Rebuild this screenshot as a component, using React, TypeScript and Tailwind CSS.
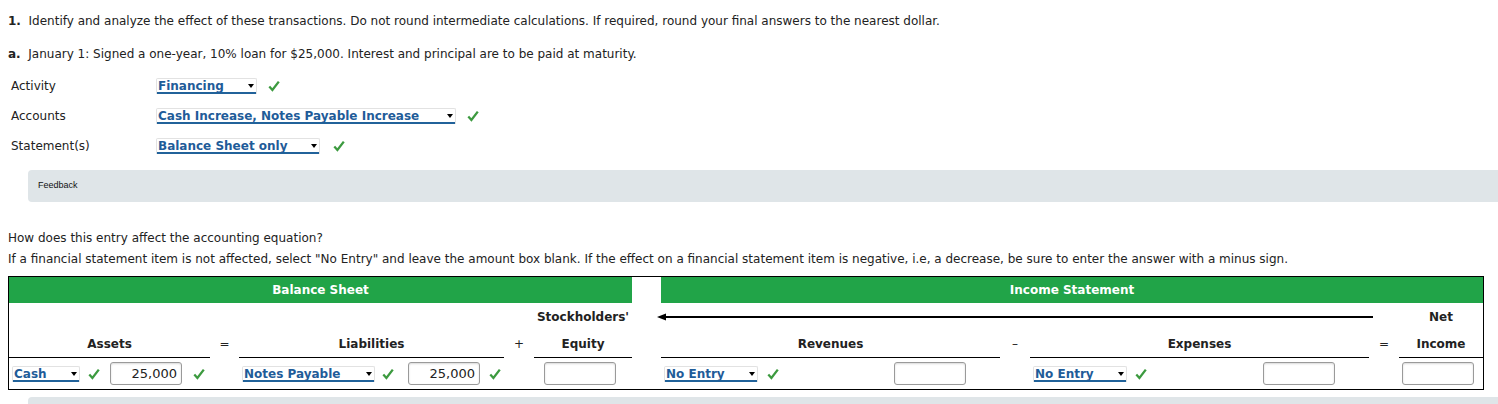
import React from "react";

const FONT = "font-['Verdana','DejaVu_Sans',sans-serif]";

function Check({ className = "" }: { className?: string }) {
  return (
    <svg viewBox="0 0 12 12" className={`w-[12px] h-[12px] shrink-0 ${className}`}>
      <path d="M1.3 6.6 L4.4 10 L10.8 1.6" fill="none" stroke="#3c9a3f" strokeWidth="2.3" strokeLinecap="butt" />
    </svg>
  );
}

function Select({ label, width }: { label: string; width: string }) {
  return (
    <div
      className={`${width} h-[16px] flex items-center justify-between pl-[1px] pr-[2px] bg-white rounded-t-[2px] border border-b-0 border-[#e2e2e2] shadow-[inset_0_-2px_0_#21629a] shrink-0`}
    >
      <span className="text-[12px] leading-[14px] font-bold text-[#1f5c99] whitespace-nowrap -mt-[1px]">{label}</span>
      <span className="w-0 h-0 border-l-[3.5px] border-r-[3.5px] border-t-[4px] border-l-transparent border-r-transparent border-t-black mb-[1px]" />
    </div>
  );
}

function Amount({ value = "", className = "" }: { value?: string; className?: string }) {
  return (
    <div
      className={`w-[72px] h-[23px] shrink-0 rounded-[3px] border border-[#9a9a9a] bg-white shadow-[inset_0_1px_2px_rgba(0,0,0,0.15)] flex items-center justify-end pr-[4px] text-[13px] text-[#222] ${className}`}
    >
      {value}
    </div>
  );
}

function Field({ label, value, width, check }: { label: string; value: string; width: string; check: string }) {
  return (
    <div className="flex items-center h-[30px]">
      <div className="w-[148px] text-[12px] text-[#222] pl-[3px]">{label}</div>
      <Select label={value} width={width} />
      <Check className={check} />
    </div>
  );
}

export default function App() {
  return (
    <div className={`${FONT} bg-white w-[1498px] h-[404px] overflow-hidden text-[#222] relative`}>
      <div className="pl-[8px] pt-[13px] text-[12px] leading-[16px]">
        <span className="font-bold">1.</span>&nbsp; Identify and analyze the effect of these transactions. Do not round intermediate calculations. If required, round your final answers to the nearest dollar.
      </div>
      <div className="pl-[8px] pt-[17px] text-[12px] leading-[16px]">
        <span className="font-bold">a.</span>&nbsp; January 1: Signed a one-year, 10% loan for $25,000. Interest and principal are to be paid at maturity.
      </div>

      <div className="pl-[8px] pt-[9px]">
        <Field label="Activity" value="Financing" width="w-[101px]" check="ml-[11px]" />
        <Field label="Accounts" value="Cash Increase, Notes Payable Increase" width="w-[300px]" check="ml-[11px]" />
        <Field label="Statement(s)" value="Balance Sheet only" width="w-[164px]" check="ml-[13px]" />
      </div>

      <div className="ml-[28px] mt-[9px] h-[32px] w-[1480px] rounded-[4px] bg-[#dfe5e8] flex items-center pl-[10px]">
        <span className="font-['Liberation_Sans',Arial,sans-serif] text-[9px] text-[#111]">Feedback</span>
      </div>

      <div className="pl-[8px] pt-[28px] text-[12px] leading-[16px]">How does this entry affect the accounting equation?</div>
      <div className="pl-[8px] pt-[5px] text-[12px] leading-[16px]">
        If a financial statement item is not affected, select "No Entry" and leave the amount box blank. If the effect on a financial statement item is negative, i.e, a decrease, be sure to enter the answer with a minus sign.
      </div>

      <div className="ml-[8px] mt-[9px] w-[1476px] border border-black">
        <div className="grid grid-cols-[201px_29px_265px_30px_98px_29px_339px_30px_339px_30px_84px] text-[12px] font-bold">
          {/* header */}
          <div className="col-span-5 h-[26px] bg-[#21a448] text-white flex items-center justify-center">Balance Sheet</div>
          <div className="h-[26px] bg-white" />
          <div className="col-span-5 h-[26px] bg-[#21a448] text-white flex items-center justify-center">Income Statement</div>

          {/* row 2 */}
          <div className="col-span-4 h-[27px]" />
          <div className="h-[27px] flex items-center justify-center">Stockholders'</div>
          <div className="col-span-5 h-[27px] flex items-center ml-[25px] mr-[26px]">
            <svg viewBox="0 0 10 8" className="w-[9px] h-[8px] shrink-0">
              <path d="M0 4 L10 0 L10 8 Z" fill="#000" />
            </svg>
            <div className="flex-1 h-[2px] bg-black" />
          </div>
          <div className="h-[27px] flex items-center justify-center">Net</div>

          {/* row 3 */}
          <div className="h-[28px] flex items-center justify-center border-b border-black">Assets</div>
          <div className="h-[28px] flex items-center justify-center font-normal">=</div>
          <div className="h-[28px] flex items-center justify-center border-b border-black">Liabilities</div>
          <div className="h-[28px] flex items-center justify-center font-normal">+</div>
          <div className="h-[28px] flex items-center justify-center border-b border-black">Equity</div>
          <div className="h-[28px]" />
          <div className="h-[28px] flex items-center justify-center border-b border-black">Revenues</div>
          <div className="h-[28px] flex items-center justify-center font-normal">–</div>
          <div className="h-[28px] flex items-center justify-center border-b border-black">Expenses</div>
          <div className="h-[28px] flex items-center justify-center font-normal">=</div>
          <div className="h-[28px] flex items-center justify-center border-b border-black">Income</div>

          {/* row 4 */}
          <div className="h-[31px] flex items-center pl-[3px] font-normal">
            <Select label="Cash" width="w-[68px]" />
            <Check className="ml-[8px]" />
            <Amount value="25,000" className="ml-[10px]" />
            <Check className="ml-[11px]" />
          </div>
          <div />
          <div className="h-[31px] flex items-center pl-[3px] font-normal">
            <Select label="Notes Payable" width="w-[133px]" />
            <Check className="ml-[7px]" />
            <Amount value="25,000" className="ml-[14px]" />
            <Check className="ml-[9px]" />
          </div>
          <div />
          <div className="h-[31px] flex items-center pl-[10px]">
            <Amount />
          </div>
          <div />
          <div className="h-[31px] flex items-center pl-[3px] font-normal">
            <Select label="No Entry" width="w-[94px]" />
            <Check className="ml-[9px]" />
            <Amount className="ml-[115px]" />
          </div>
          <div />
          <div className="h-[31px] flex items-center pl-[3px] font-normal">
            <Select label="No Entry" width="w-[94px]" />
            <Check className="ml-[8px]" />
            <Amount className="ml-[116px]" />
          </div>
          <div />
          <div className="h-[31px] flex items-center pl-[3px]">
            <Amount />
          </div>
        </div>
      </div>

      <div className="ml-[28px] mt-[7px] h-[20px] w-[1480px] rounded-[4px] bg-[#dfe5e8]" />
    </div>
  );
}
